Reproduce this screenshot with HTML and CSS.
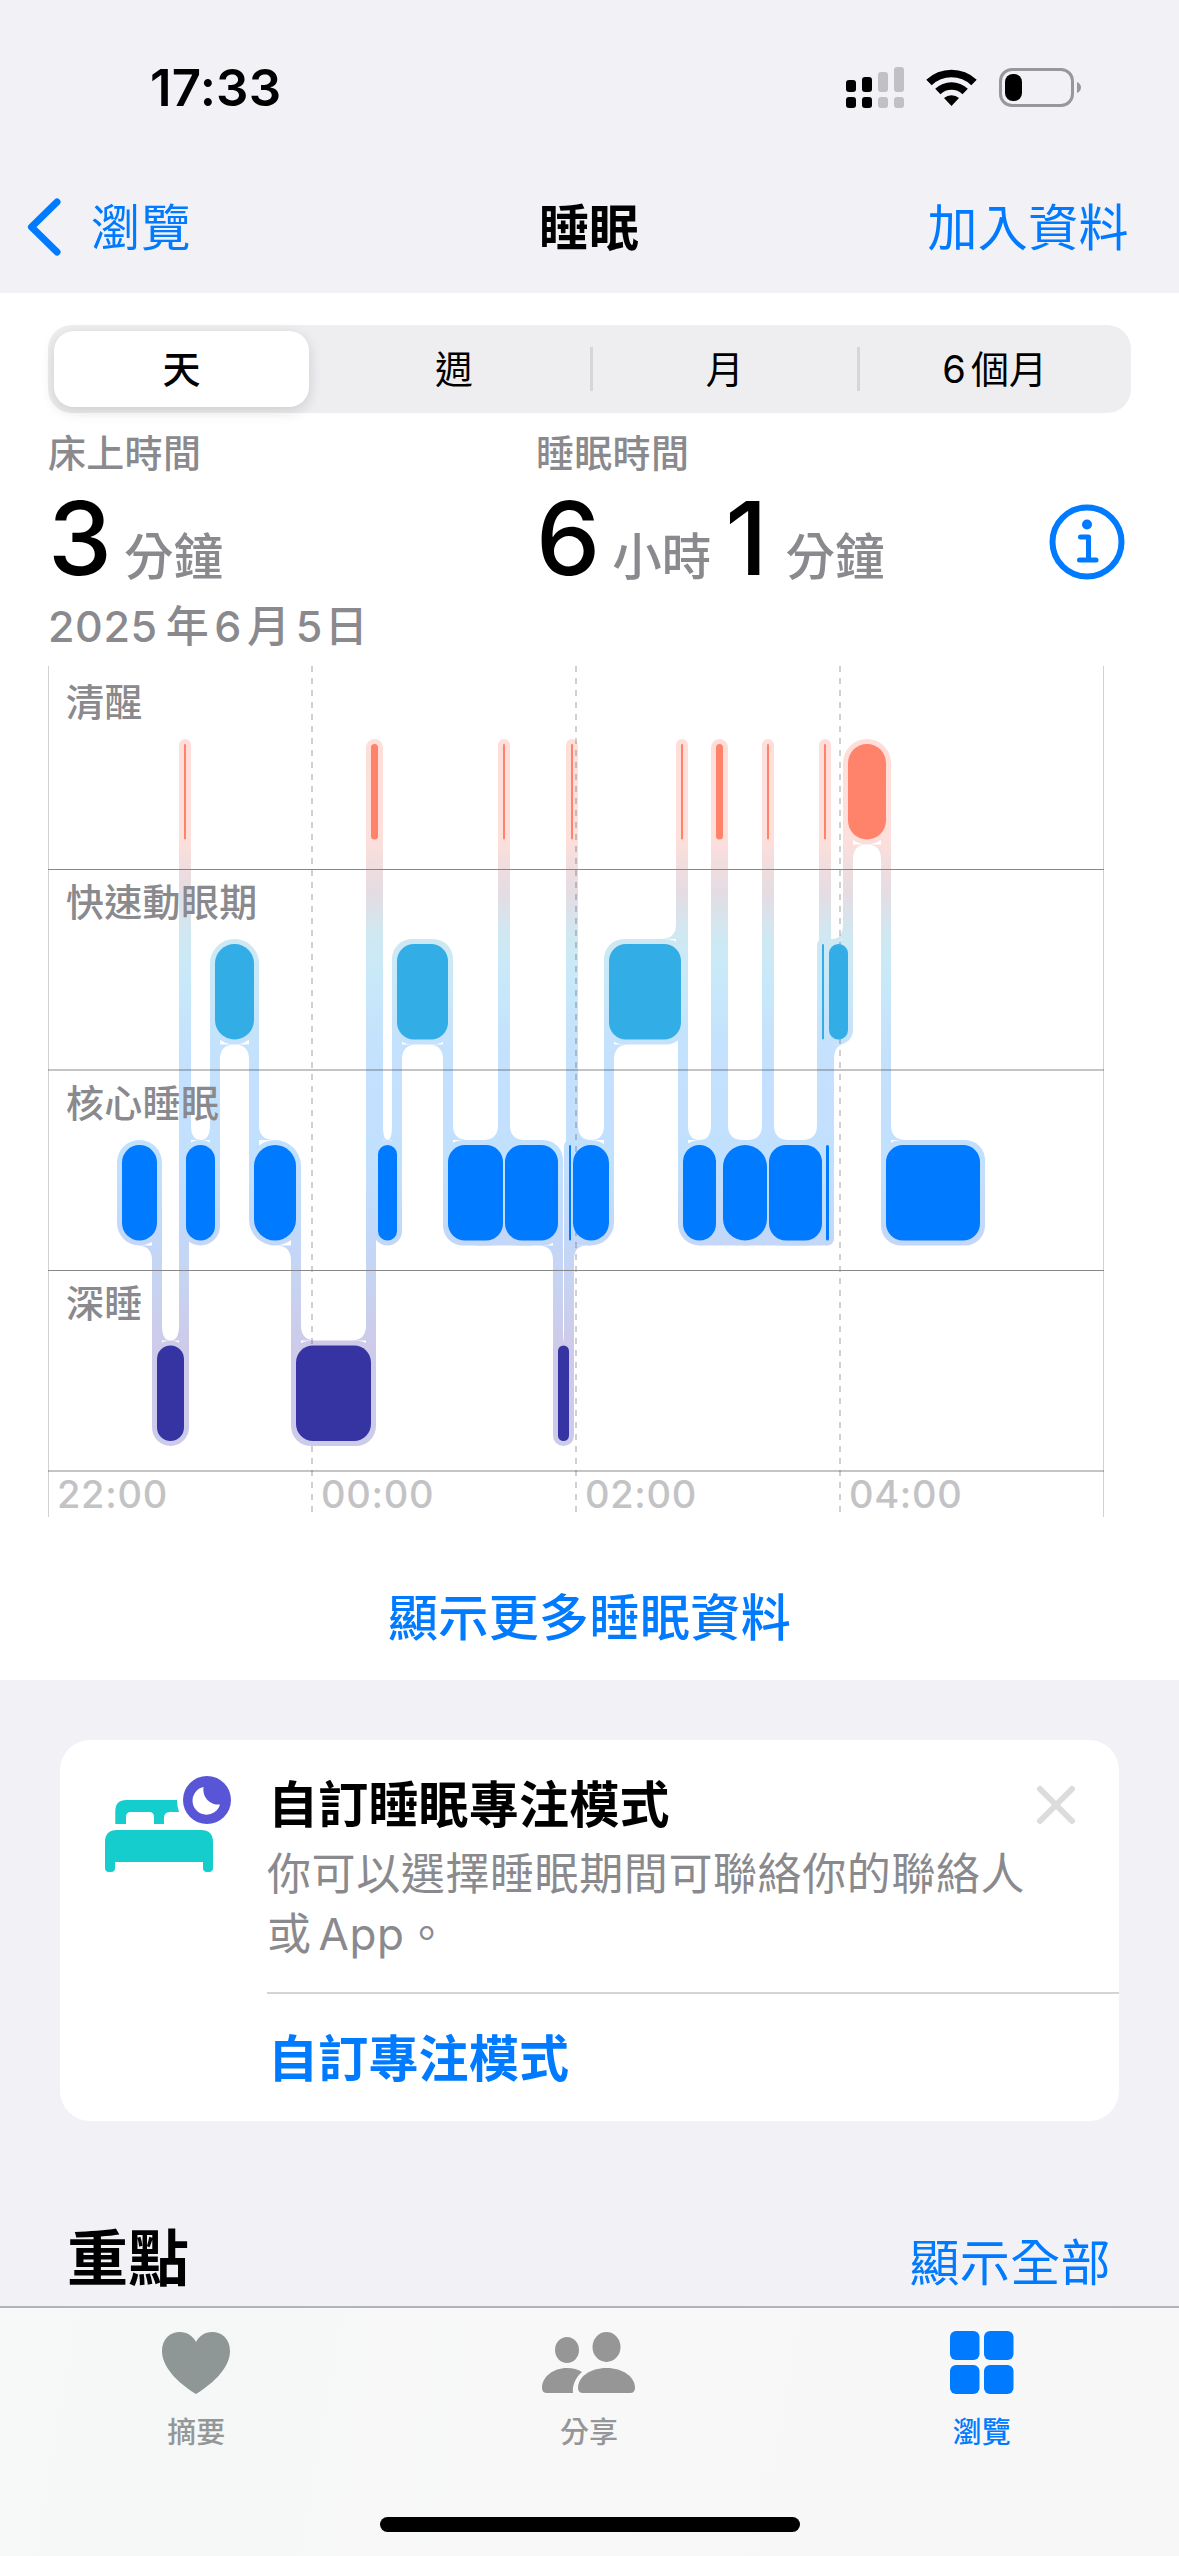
FILE: index.html
```html
<!DOCTYPE html>
<html lang="zh-Hant">
<head>
    <meta charset="UTF-8">
    <meta name="viewport" content="width=device-width, initial-scale=1.0">
    <title>睡眠</title>
    <link rel="stylesheet" href="styles.css">
</head>
<body>
    <header class="header">
        <div class="status-bar">
            <span class="time">17:33</span>
            <svg class="status-icons" width="236" height="54" viewBox="846 60 236 54">
                <rect x="846" y="80" width="10" height="12" rx="3"/>
                <rect x="862" y="77" width="10" height="15" rx="3"/>
                <rect x="846" y="97" width="10" height="11" rx="3"/>
                <rect x="862" y="97" width="10" height="11" rx="3"/>
                <g fill="#c1c1c5">
                    <rect x="878" y="72" width="10" height="20" rx="3"/>
                    <rect x="894" y="67" width="10" height="25" rx="3"/>
                    <rect x="878" y="97" width="10" height="11" rx="3"/>
                    <rect x="894" y="97" width="10" height="11" rx="3"/>
                </g>
                <path d="M926.300 79.800 A36.500 36.500 0 0 1 976.700 79.800 L971.300 85.200 A28.500 28.500 0 0 0 931.700 85.200Z"/>
                <path d="M935.200 88.800 A23.500 23.500 0 0 1 967.800 88.800 L962.500 94.200 A16 16 0 0 0 940.500 94.200Z"/>
                <path d="M944 98 A11.500 11.500 0 0 1 959 98 L951.500 106Z"/>
                <rect x="1000.500" y="69.500" width="72" height="36" rx="11.500" fill="none" stroke="#98989c" stroke-width="3"/>
                <rect x="1005" y="74" width="17" height="27" rx="8"/>
                <path d="M1077 82 C1082.300 84 1082.300 91 1077 93Z" fill="#98989c"/>
            </svg>
        </div>
        <nav class="nav-bar">
            <a class="back">
                <svg width="40" height="64" viewBox="0 0 40 64"><path d="M33 6 L7.500 31 L33 56" fill="none" stroke="#007aff" stroke-width="7" stroke-linecap="round" stroke-linejoin="round"/></svg>
                <span>瀏覽</span>
            </a>
            <h1>睡眠</h1>
            <a class="add">加入資料</a>
        </nav>
    </header>

    <main>
        <section class="sleep">
            <div class="segmented">
                <span class="active">天</span>
                <span>週</span>
                <span>月</span>
                <span><i>6</i>個月</span>
            </div>

            <div class="stats">
                <div class="stat">
                    <div class="label">床上時間</div>
                    <div class="value"><b>3</b><span class="unit">分鐘</span></div>
                </div>
                <div class="stat">
                    <div class="label">睡眠時間</div>
                    <div class="value"><b>6</b><span class="unit">小時</span><b class="one">1</b><span class="unit">分鐘</span></div>
                </div>
                <svg class="info" width="76" height="76" viewBox="0 0 76 76">
                    <circle cx="38" cy="38" r="34.500" fill="none" stroke="#007aff" stroke-width="6"/>
                    <circle cx="38" cy="20.500" r="5" fill="#007aff"/>
                    <path d="M31.500 33 H39.500 V56 M30.500 56 H47" fill="none" stroke="#007aff" stroke-width="5" stroke-linecap="round" stroke-linejoin="round"/>
                </svg>
            </div>
            <div class="date">2025<i>年</i>6<i>月</i>5<i>日</i></div>

            <svg id="sleepChart" class="chart" width="1058" height="852" viewBox="47 666 1058 852">
                <defs>
                    <linearGradient id="flow" gradientUnits="userSpaceOnUse" x1="0" y1="740" x2="0" y2="1440">
                        <stop offset="0" stop-color="#ffded9"/>
                        <stop offset="0.140" stop-color="#fddfdb"/>
                        <stop offset="0.215" stop-color="#e5dce2"/>
                        <stop offset="0.280" stop-color="#cfe8f2"/>
                        <stop offset="0.340" stop-color="#c8e9f9"/>
                        <stop offset="0.430" stop-color="#c4e2fc"/>
                        <stop offset="0.500" stop-color="#c3e1ff"/>
                        <stop offset="0.610" stop-color="#c1e0fd"/>
                        <stop offset="0.715" stop-color="#c3d7f8"/>
                        <stop offset="0.780" stop-color="#c7d3f1"/>
                        <stop offset="0.860" stop-color="#cdcbe9"/>
                        <stop offset="1" stop-color="#cdcbea"/>
                    </linearGradient>
                </defs>
                <g id="halo" fill="url(#flow)"></g>
                <g class="grid">
                    <path class="edge" d="M48.500 666 V1517 M1103.500 666 V1517"/>
                    <path class="dash" d="M312 666 V1517 M576 666 V1517 M840 666 V1517"/>
                    <path class="row" d="M48 869.500 H1104 M48 1270.500 H1104"/>
                    <path class="row light" d="M48 1070 H1104 M48 1471 H1104"/>
                </g>
                <g class="stage-names">
                    <text x="66" y="716">清醒</text>
                    <text x="66" y="916">快速動眼期</text>
                    <text x="66" y="1117">核心睡眠</text>
                    <text x="66" y="1317">深睡</text>
                </g>
                <g class="hours">
                    <text x="57" y="1508">22:00</text>
                    <text x="321" y="1508">00:00</text>
                    <text x="585" y="1508">02:00</text>
                    <text x="849" y="1508">04:00</text>
                </g>
                <g id="bars"></g>
            </svg>

            <a class="more">顯示更多睡眠資料</a>
        </section>

        <section class="card">
            <svg class="bed" width="136" height="96" viewBox="100 1772 136 96">
                <path d="M115.300 1824 V1811 Q115.300 1800 126.500 1800 H177 Q177 1806 179 1812 H170 Q164 1812 164 1818 V1824 H154 V1817 Q154 1812 149 1812 H131 Q126 1812 126 1817 V1824Z" fill="#16cdcd"/>
                <path d="M105 1842 Q105 1830 117 1830 H201 Q213 1830 213 1842 V1868 Q213 1872 209 1872 H207 Q203 1872 203 1868 V1862 H115 V1868 Q115 1872 111 1872 H109 Q105 1872 105 1868Z" fill="#16cdcd"/>
                <circle cx="207" cy="1800" r="24" fill="#5856d6"/>
                <path d="M203.500 1787 A14 14 0 1 0 220 1804.500 A15 15 0 0 1 203.500 1787Z" fill="#fff"/>
            </svg>
            <div class="card-body">
                <div class="card-top">
                    <h2>自訂睡眠專注模式</h2>
                    <svg class="close" width="42" height="42" viewBox="0 0 42 42"><path d="M5 5 L37 37 M37 5 L5 37" stroke="#dcdcde" stroke-width="6" stroke-linecap="round"/></svg>
                </div>
                <p>你可以選擇睡眠期間可聯絡你的聯絡人<br>或 App。</p>
                <a class="action">自訂專注模式</a>
            </div>
        </section>

        <section class="highlights">
            <h2>重點</h2>
            <a>顯示全部</a>
        </section>
    </main>

    <footer class="tab-bar">
        <div class="tabs">
            <div class="tab">
                <svg width="70" height="66" viewBox="0 0 70 66"><path d="M35 64 C22 56 1 40 1 21 C1 9 9 2 19 2 C26 2 32 6 35 12 C38 6 44 2 51 2 C61 2 69 9 69 21 C69 40 48 56 35 64Z" fill="#8e9696"/></svg>
                <span>摘要</span>
            </div>
            <div class="tab">
                <svg width="96" height="66" viewBox="541 2330 96 66" fill="#969696">
                    <ellipse cx="567" cy="2350" rx="12" ry="13"/>
                    <ellipse cx="606.500" cy="2347" rx="14" ry="15"/>
                    <path d="M573 2393 H547 Q542 2393 542 2388 C542 2377 553 2368 567 2368 C573 2368 578 2369.500 582 2372 C576 2377 572 2385 573 2393Z"/>
                    <path d="M583 2393 Q578 2393 578 2388 C578 2377 590 2368 606.500 2368 C623 2368 635 2377 635 2388 Q635 2393 630 2393Z"/>
                </svg>
                <span>分享</span>
            </div>
            <div class="tab active">
                <svg width="64" height="66" viewBox="0 0 64 66" fill="#007aff">
                    <rect x="0" y="1" width="29.500" height="29" rx="6"/>
                    <rect x="34" y="1" width="29.500" height="29" rx="6"/>
                    <rect x="0" y="35" width="29.500" height="29" rx="6"/>
                    <rect x="34" y="35" width="29.500" height="29" rx="6"/>
                </svg>
                <span>瀏覽</span>
            </div>
        </div>
        <div class="home-indicator"></div>
    </footer>

    <script src="chart.js"></script>
</body>
</html>
```
FILE: styles.css
```css
* {
    margin: 0;
    padding: 0;
    box-sizing: border-box;
}

body {
    width: 1179px;
    height: 2556px;
    display: flex;
    flex-direction: column;
    overflow: hidden;
    background: #f1f1f6;
    color: #000;
    font-family: Inter, "Noto Sans CJK TC", sans-serif;
}

a {
    color: #007aff;
    font-size: 50px;
    line-height: 60px;
    letter-spacing: 0.4px;
    white-space: nowrap;
}

i {
    font-style: normal;
}

svg {
    display: block;
    flex: none;
}

/* Header */
.header {
    height: 293px;
}

.status-bar {
    display: flex;
    justify-content: space-between;
    height: 163px;
    padding: 60px 97px 0 150px;
}

.time {
    font-size: 51px;
    font-weight: 600;
    line-height: 56px;
    letter-spacing: 0.2px;
}

.status-icons {
    overflow: visible;
}

.nav-bar {
    display: grid;
    grid-template-columns: 1fr auto 1fr;
    align-items: center;
    height: 130px;
    padding: 0 50px 0 24px;
}

.nav-bar h1 {
    font-size: 50px;
    font-weight: 600;
    line-height: 60px;
    padding-left: 25px;
}

.back {
    display: flex;
    align-items: center;
    gap: 27px;
    font-size: 49.5px;
}

.add {
    text-align: right;
}

/* Sleep data */
.sleep {
    height: 1387px;
    padding-top: 32px;
    background: #fff;
}

.segmented {
    display: grid;
    grid-template-columns: repeat(4, 1fr);
    align-items: center;
    height: 88px;
    margin: 0 48px;
    padding: 6px;
    border-radius: 24px;
    background: #eeeef0;
    font-size: 38px;
    line-height: 44px;
    text-align: center;
}

.segmented span:nth-child(2) {
    padding-right: 3px;
}

.segmented span:last-child {
    padding-left: 4px;
}

.segmented i {
    margin-right: 5px;
}

.segmented span + span + span {
    border-left: 3px solid #d6d6d9;
}

.segmented .active {
    width: 255px;
    border-radius: 20px;
    background: #fff;
    box-shadow: 0 4px 14px rgba(0, 0, 0, 0.14);
    font-weight: 500;
    line-height: 76px;
}

.stats {
    display: flex;
    height: 180px;
    padding: 17px 54px 0 48px;
}

.stat {
    width: 488px;
}

.stat + .stat {
    width: 513px;
}

.label {
    color: #8a8a8e;
    font-size: 38px;
    font-weight: 500;
    line-height: 47px;
    letter-spacing: 0.3px;
}

.value {
    display: flex;
    align-items: baseline;
    height: 110px;
    padding-top: 6px;
    line-height: 110px;
}

.value b {
    margin-right: 15px;
    font-size: 102px;
    font-weight: 500;
    letter-spacing: -3px;
}

.value .one {
    margin: 0 21px 0 14px;
}

.unit {
    color: #8a8a8e;
    font-size: 49.5px;
    font-weight: 500;
}

.info {
    margin-top: 74px;
}

.date {
    height: 73px;
    padding-left: 48px;
    color: #8a8a8e;
    font-size: 43px;
    font-weight: 500;
    line-height: 67px;
    letter-spacing: 0.6px;
}

.date i {
    margin: 0 5px;
}

.date i:first-child {
    margin-left: 8px;
}

.date i:last-child {
    margin-left: 2px;
}

.chart {
    margin-left: 47px;
}

.edge {
    fill: none;
    stroke: #d1d1d4;
}

.dash {
    fill: none;
    stroke: #3c3c43;
    stroke-opacity: 0.24;
    stroke-width: 2;
    stroke-dasharray: 6 6;
}

.row {
    stroke: #87878a;
}

.row.light {
    stroke: #3c3c43;
    stroke-opacity: 0.3;
    stroke-width: 2;
}

.stage-names {
    fill: #8a8a8e;
    font-size: 38px;
    font-weight: 500;
    letter-spacing: 0.3px;
}

.hours {
    fill: #c3c3c5;
    font-size: 38px;
    font-weight: 500;
    letter-spacing: 0.7px;
}

.awake {
    fill: #ff826b;
}

.rem {
    fill: #32ade6;
}

.core {
    fill: #007aff;
}

.deep {
    fill: #3634a3;
}

.more {
    display: block;
    margin-top: 70px;
    font-weight: 500;
    text-align: center;
}

/* Focus card */
.card {
    display: flex;
    height: 381px;
    margin: 60px 60px 0;
    border-radius: 30px;
    background: #fff;
}

.bed {
    margin: 32px 31px 0 40px;
    overflow: visible;
}

.card-body {
    flex: 1;
}

.card-top {
    display: flex;
    justify-content: space-between;
    height: 104px;
    padding: 35px 42px 0 1px;
}

.card-top h2 {
    font-size: 50px;
    font-weight: 600;
    line-height: 60px;
    letter-spacing: 0.2px;
}

.close {
    margin-top: 9px;
}

.card p {
    height: 150px;
    border-bottom: 2px solid #d4d4d6;
    color: #8a8a8e;
    font-size: 44px;
    line-height: 60px;
    letter-spacing: 0.6px;
    word-spacing: -6px;
    white-space: nowrap;
}

.action {
    display: block;
    padding: 35px 0 0 1px;
    font-weight: 600;
    letter-spacing: 0.2px;
}

/* Highlights */
.highlights {
    display: flex;
    justify-content: space-between;
    height: 185px;
    padding: 102px 68px 0 67px;
}

.highlights h2 {
    font-size: 61px;
    font-weight: 700;
    line-height: 72px;
}

.highlights a {
    margin-top: 10px;
}

/* Tab bar */
.tab-bar {
    height: 250px;
    border-top: 2px solid #b2b2b7;
    background: linear-gradient(100deg, #f7f9f9 0%, #f5f8f7 15%, #f8f8f8 40%, #f7f7f8 100%);
}

.tabs {
    display: grid;
    grid-template-columns: repeat(3, 1fr);
    height: 209px;
    padding: 22px 1px 0 0;
}

.tab {
    display: flex;
    flex-direction: column;
    align-items: center;
    gap: 17px;
    color: #949698;
    font-size: 29px;
    font-weight: 500;
    line-height: 40px;
}

.tab.active {
    color: #007aff;
}

.home-indicator {
    width: 420px;
    height: 15px;
    margin: 0 auto;
    border-radius: 8px;
    background: #000;
}
```
FILE: chart.js
```js
const SVG = 'http://www.w3.org/2000/svg';
const halo = document.getElementById('halo');
const bars = document.getElementById('bars');

const tops = { awake: 744, rem: 944, core: 1145, deep: 1345.5 };
const barHeight = 95.5;
const pad = 5;

const segments = [
    ['core', 122, 157], ['deep', 157, 184], ['awake', 184, 186], ['core', 186, 215],
    ['rem', 215, 254], ['core', 254, 296], ['deep', 296, 371], ['awake', 371, 378],
    ['core', 378, 397], ['rem', 397, 448], ['core', 448, 503], ['awake', 503, 505],
    ['core', 505, 558], ['deep', 558, 569], ['core', 569, 571], ['awake', 571, 573],
    ['core', 573, 609], ['rem', 609, 681], ['awake', 681, 683], ['core', 683, 716],
    ['awake', 716, 723], ['core', 723, 767], ['awake', 767, 769], ['core', 769, 822],
    ['rem', 822, 824], ['awake', 824, 826], ['core', 826, 829], ['rem', 829, 848],
    ['awake', 848, 886], ['core', 886, 980]
];

function add(parent, name, attrs) {
    const el = document.createElementNS(SVG, name);
    for (const key in attrs) el.setAttribute(key, attrs[key]);
    parent.appendChild(el);
}

function rect(parent, x, y, width, height, rx, cls = '') {
    add(parent, 'rect', { x, y, width, height, rx, class: cls });
}

// Rounded inner corner where a connector meets a block
function fillet(x, y, dx, dy) {
    add(halo, 'path', { d: `M${x} ${y} h${dx} Q${x} ${y} ${x} ${y + dy} Z` });
}

const lastOfStage = {};

segments.forEach(([stage, x1, x2], i) => {
    const y = tops[stage];
    const w = x2 - x1;
    const hw = w + pad * 2;
    rect(bars, x1, y, w, barHeight, w <= 44 ? w / 2 : 17, stage);
    rect(halo, x1 - pad, y - pad, hw, barHeight + pad * 2, hw <= 54 ? hw / 2 : 20);

    // Neighbouring blocks of one stage share a background
    const last = lastOfStage[stage];
    if (last && x1 - last[1] <= 8) {
        const from = (last[0] + last[1]) / 2;
        rect(halo, from, y - pad, (x1 + x2) / 2 - from, barHeight + pad * 2, 0);
    }
    lastOfStage[stage] = [x1, x2];

    const prev = segments[i - 1];
    const next = segments[i + 1];
    const prevDir = prev ? Math.sign(tops[prev[0]] - y) : 0;
    const nextDir = next ? Math.sign(tops[next[0]] - y) : 0;
    const room = prevDir === nextDir ? (w - pad * 2) / 2 : w - pad - 3;
    const r = Math.min(15, room);
    const edge = dir => dir < 0 ? y - pad : y + barHeight + pad;
    if (prevDir && r > 0) fillet(x1 + pad, edge(prevDir), r, prevDir * 15);
    if (nextDir && r > 0) fillet(x2 - pad, edge(nextDir), -r, nextDir * 15);

    if (next) {
        const a = y + barHeight / 2;
        const b = tops[next[0]] + barHeight / 2;
        rect(halo, x2 - pad, Math.min(a, b), pad * 2, Math.abs(a - b), 0);
    }
});

fillet(574, 1245.5, 13, 14);
```
